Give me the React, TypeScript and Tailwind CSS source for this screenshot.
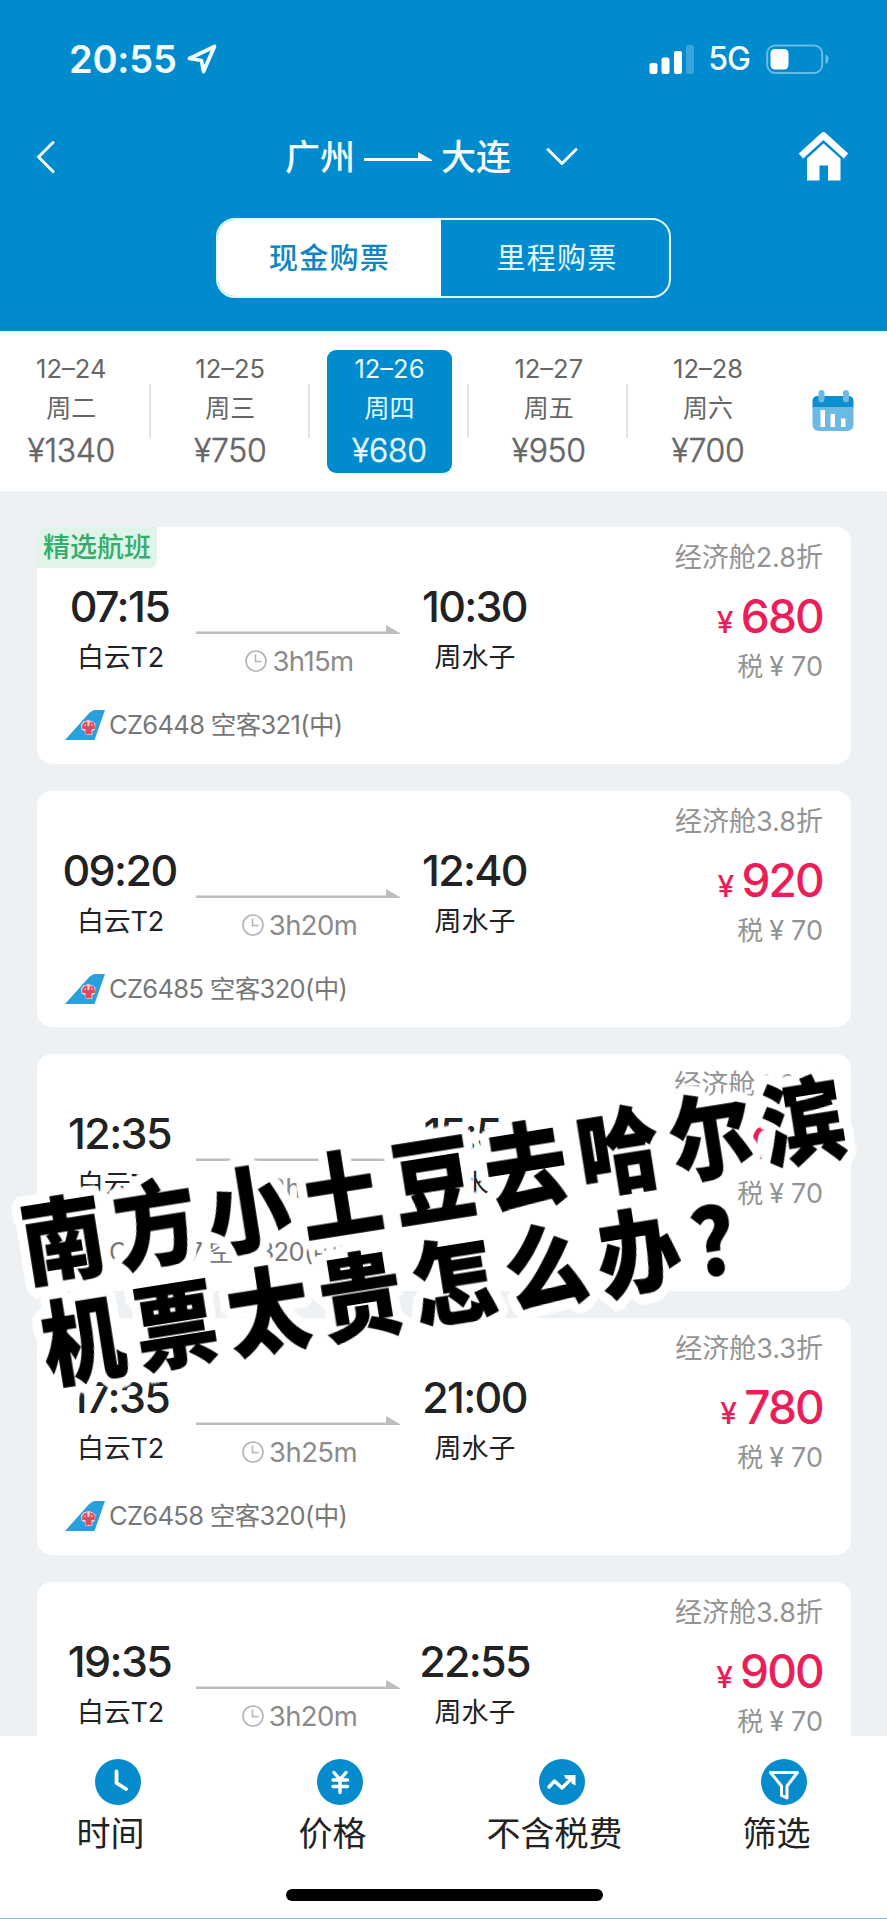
import React from "react";

const FONT = "font-['Inter','Noto_Sans_CJK_SC',sans-serif]";

const days = [
  { date: "12–24", week: "周二", price: "¥1340" },
  { date: "12–25", week: "周三", price: "¥750" },
  { date: "12–26", week: "周四", price: "¥680", active: true },
  { date: "12–27", week: "周五", price: "¥950" },
  { date: "12–28", week: "周六", price: "¥700" },
];

type Flight = {
  dep: string;
  arr: string;
  time: string;
  no: string;
  cabin: string;
  price: string;
  featured?: boolean;
};

const flights: Flight[] = [
  { dep: "07:15", arr: "10:30", time: "3h15m", no: "CZ6448 空客321(中)", cabin: "经济舱2.8折", price: "680", featured: true },
  { dep: "09:20", arr: "12:40", time: "3h20m", no: "CZ6485 空客320(中)", cabin: "经济舱3.8折", price: "920" },
  { dep: "12:35", arr: "15:55", time: "3h20m", no: "CZ6487 空客320(中)", cabin: "经济舱4.2折", price: "1010" },
  { dep: "17:35", arr: "21:00", time: "3h25m", no: "CZ6458 空客320(中)", cabin: "经济舱3.3折", price: "780" },
  { dep: "19:35", arr: "22:55", time: "3h20m", no: "CZ6490 空客320(中)", cabin: "经济舱3.8折", price: "900" },
];

function StatusBar() {
  return (
    <div className="flex h-[118px] items-center pr-[58px] pl-[69px] text-[#f3fdff]">
      <span className="text-[38px] leading-none font-semibold tracking-[-0.2px]">20:55</span>
      <svg className="ml-[10px]" width="31" height="31" viewBox="0 0 31 31" fill="none" stroke="currentColor" strokeWidth="3.8" strokeLinejoin="round">
        <path d="M2.500 14.500 L27.500 2.500 L16.500 27.500 L14.500 16.500 Z" />
      </svg>
      <div className="ml-auto flex items-center">
        <svg width="46" height="29" viewBox="0 0 46 29" fill="#fff">
          <rect x="0.5" y="18" width="8" height="11" rx="2.2" />
          <rect x="12.5" y="12.5" width="8" height="16.500" rx="2.2" />
          <rect x="25" y="6" width="8" height="23" rx="2.200" />
          <rect x="37" y="0" width="8" height="29" rx="2.2" opacity=".22" />
        </svg>
        <span className="ml-[13px] text-[32px] leading-none font-medium tracking-[-1px]">5G</span>
        <svg className="ml-[16px]" width="63" height="31" viewBox="0 0 63 31">
          <rect x="1.200" y="1.500" width="55" height="27.500" rx="8" fill="none" stroke="#fff" strokeOpacity=".42" strokeWidth="2" />
          <rect x="4.500" y="5" width="18" height="20.500" rx="4.500" fill="#fff" />
          <path d="M59.500 10.500 Q62.500 12 62.500 15 Q62.500 18.500 59.500 20 Z" fill="#fff" fillOpacity=".45" />
        </svg>
      </div>
    </div>
  );
}

function TitleBar() {
  return (
    <div className="flex h-[78px] items-center pr-[38px] pl-[36px] text-[#f7fdff]">
      <svg width="20" height="34" viewBox="0 0 20 34" fill="none" stroke="currentColor" strokeWidth="3" strokeLinecap="round" strokeLinejoin="round">
        <path d="M17 2.500 L2.500 17 L17 31.500" />
      </svg>
      <span className="ml-[229px] text-[35px] leading-none font-medium">广州</span>
      <svg className="ml-[9px]" width="68" height="16" viewBox="0 0 68 16" fill="currentColor">
        <path d="M0 9 H54 V3 L68 11 V12 H0 Z" />
      </svg>
      <span className="ml-[9px] text-[35px] leading-none font-medium">大连</span>
      <svg className="ml-[35px]" width="32" height="20" viewBox="0 0 32 20" fill="none" stroke="currentColor" strokeWidth="3" strokeLinecap="round" strokeLinejoin="round">
        <path d="M2 2.500 L16 16.500 L30 2.500" />
      </svg>
      <svg className="ml-auto" width="51" height="50" viewBox="0 0 51 50">
        <path d="M3 24 L25.500 3.500 L48 24" fill="none" stroke="#fff" strokeWidth="6.500" strokeLinejoin="round" />
        <path d="M9 26.500 L25.500 11.500 L42.500 26.500 V48.500 H30 V33.500 H21.500 V48.500 H9 Z" fill="#fff" />
      </svg>
    </div>
  );
}

function PayTabs() {
  return (
    <div className="mt-[22px] mr-[216px] ml-[216px] flex h-[80px] overflow-hidden rounded-[19px] border-[2.5px] border-[#e2f7ff] text-[29px] tracking-[1.3px]">
      <div className="flex w-[223px] items-center justify-center bg-white pt-[1px] font-medium text-[#0f86c4]">现金购票</div>
      <div className="flex flex-1 items-center justify-center pt-[1px] pl-[4px] text-[#e6f9ff]">里程购票</div>
    </div>
  );
}

function CalendarIcon() {
  return (
    <svg width="42" height="43" viewBox="0 0 42 43">
      <path d="M0.500 19 V12 Q0.500 7 6 7 H36 Q41.500 7 41.500 12 V19 Z" fill="#0d8fce" />
      <path d="M0.500 18 H41.500 V35 Q41.500 42 35 42 H7 Q0.500 42 0.500 35 Z" fill="#6cb9e2" />
      <rect x="6.500" y="1" width="6" height="12.500" rx="3" fill="#6cb9e2" />
      <rect x="31" y="1" width="6" height="12.500" rx="3" fill="#6cb9e2" />
      <path d="M8.500 21 H13 V38 H8.500 Z M18.500 25 H23 V38 H18.500 Z M29 29.500 H33.500 V38 H29 Z" fill="#fff" />
    </svg>
  );
}

function DateStrip() {
  return (
    <div className="flex h-[160px] shrink-0 bg-white text-[#666]">
      <div className="flex w-[788px] pt-[19px]">
        {days.map((d, i) => (
          <React.Fragment key={d.date}>
            {i > 0 && <div className="mt-[34px] h-[54px] w-[2px] shrink-0 bg-[#e3e4e6]" />}
            <div className={i === 0 ? "flex w-[148.500px] shrink-0 justify-center pr-[6px]" : "flex w-[157.300px] shrink-0 justify-center pl-[2px]"}>
              <div
                className={
                  d.active
                    ? "flex h-[123px] w-[125px] shrink-0 flex-col items-center rounded-[9px] bg-[#008bcf] text-[#e9fbff]"
                    : "flex h-[123px] w-[125px] shrink-0 flex-col items-center"
                }
              >
                <span className="mt-[5px] text-[25.500px] leading-[28px]">{d.date}</span>
                <span className="mt-[11px] text-[25px] leading-[28px]">{d.week}</span>
                <span className="mt-[12px] text-[32px] leading-[34px] font-light tracking-[-0.300px] [-webkit-text-stroke:0.500px_currentColor]">{d.price}</span>
              </div>
            </div>
          </React.Fragment>
        ))}
      </div>
      <div className="flex-1 pt-[58px] pl-[24px]">
        <CalendarIcon />
      </div>
    </div>
  );
}

function TailLogo() {
  return (
    <svg width="40" height="30" viewBox="0 0 40 30">
      <path d="M0 30 L22 5.500 Q26 0.500 30 0 H40 L29.500 30 Z" fill="#2a9fdd" />
      <path d="M16 14.500 L18.500 11.500 L23.500 10 L28 11.500 L30.500 14 L30 19.500 L27.500 21.500 L27 25 H20.500 L20 21.500 L16.500 19.500 Z" fill="#f1cfd8" />
      <g fill="none" stroke="#dd4a5e" strokeLinecap="round">
        <path d="M18 18 Q18 14.500 20 13 M21.500 17 V12.500 M25.500 17 V12.500 M29 18 Q29 14.500 27.500 13" strokeWidth="1.800" />
        <path d="M19.500 17.500 H27.500 M22 19 V23 M25 19 V23" strokeWidth="3" />
      </g>
    </svg>
  );
}

function FlightCard({ f }: { f: Flight }) {
  return (
    <div className="relative flex h-[236.500px] shrink-0 justify-between rounded-[15px] bg-white">
      {f.featured && (
        <div className="absolute top-0 left-0 flex h-[41px] w-[120px] items-center justify-center rounded-tl-[10px] rounded-br-[8px] bg-[#e0f4e8] pt-[2px] text-[27px] font-medium text-[#32ad6c]">
          精选航班
        </div>
      )}
      <div className="flex flex-col pt-[58px]">
        <div className="flex h-[125px]">
          <div className="flex w-[159px] flex-col items-center pl-[8px] text-[#222]">
            <span className="-ml-[2px] text-[43px] leading-[42px] font-medium tracking-[-1.600px]">{f.dep}</span>
            <span className="mt-[16px] text-[27px] leading-[30px] tracking-[-0.200px]">白云T2</span>
          </div>
          <div className="flex w-[204px] flex-col items-center pt-[40px] text-[#8b8b8b]">
            <svg width="204" height="10" viewBox="0 0 204 10" fill="#bdbdbd">
              <path d="M0 6.500 H190 V0 L204 8 V9 H0 Z" />
            </svg>
            <div className="mt-[11px] flex items-center pl-[3px]">
              <svg width="22" height="22" viewBox="0 0 22 22" fill="none" stroke="#b4b4b4" strokeWidth="1.600">
                <circle cx="11" cy="11" r="10" />
                <path d="M10.500 4.500 V11.500 H16.500" />
              </svg>
              <span className="ml-[5px] text-[27.500px] leading-[30px] tracking-[-0.600px]">{f.time}</span>
            </div>
          </div>
          <div className="flex w-[150px] flex-col items-center text-[#222]">
            <span className="-ml-[1px] text-[43px] leading-[42px] font-medium tracking-[-1.700px]">{f.arr}</span>
            <span className="mt-[16px] text-[27px] leading-[30px]">周水子</span>
          </div>
        </div>
        <div className="flex items-center pl-[28px] text-[#777]">
          <TailLogo />
          <span className="ml-[4px] text-[25.500px] leading-[30px] tracking-[-0.650px]">{f.no}</span>
        </div>
      </div>
      <div className="flex flex-col items-end pt-[16px] pr-[28px] text-[#939393]">
        <span className="text-[27px] leading-[30px]">{f.cabin}</span>
        <span className="mt-[20px] flex items-baseline text-[46px] leading-[46px] font-medium tracking-[-1.800px] text-[#ea1e58]">
          <span className="mr-[9px] text-[30px] leading-[30px]">¥</span>
          {f.price}
        </span>
        <span className="mt-[13px] flex text-[27px] leading-[30px]">
          <span className="text-[26px]">税</span>
          <span className="mr-[7px] ml-[6px]">¥</span>
          70
        </span>
      </div>
    </div>
  );
}

const actions = [
  {
    label: "时间",
    icon: <path d="M21.500 12.500 V24 L31 30" fill="none" stroke="#fff" strokeWidth="3.800" strokeLinecap="round" strokeLinejoin="round" />,
  },
  {
    label: "价格",
    icon: (
      <path d="M17 13.500 L23 20.500 L29 13.500 M16 21 H30.500 M16 27.500 H30.500 M23 21 V33.500" fill="none" stroke="#fff" strokeWidth="3.400" strokeLinecap="round" />
    ),
  },
  {
    label: "不含税费",
    icon: (
      <>
        <path d="M10 28 L15.500 22 L23 29 L33 19" fill="none" stroke="#fff" strokeWidth="3.400" strokeLinecap="round" strokeLinejoin="round" />
        <path d="M25 16 H36.500 V26.500 L32.500 24.500 V20 H27 Z" fill="#fff" />
      </>
    ),
  },
  {
    label: "筛选",
    icon: (
      <path d="M9.500 13.500 H36.500 L26 27 V39 L20.500 36.500 V27 Z" fill="none" stroke="#fff" strokeWidth="3" strokeLinejoin="round" />
    ),
  },
];

function BottomBar() {
  return (
    <footer className="z-10 flex h-[183px] shrink-0 flex-col items-center border-b border-[#74bfe4] bg-white">
      <div className="flex w-[888px] pt-[23px]">
        {actions.map((a) => (
          <div key={a.label} className="flex w-[222px] flex-col items-center">
            <svg className="ml-[14px]" width="46" height="46" viewBox="0 0 46 46">
              <circle cx="23" cy="23" r="23" fill="#068ccd" />
              {a.icon}
            </svg>
            <span className="mt-[7px] text-[34px] leading-[44px] font-normal text-[#222]">{a.label}</span>
          </div>
        ))}
      </div>
      <div className="mt-[33px] ml-[1px] h-[12px] w-[317px] rounded-full bg-black" />
    </footer>
  );
}

function Caption() {
  return (
    <div className="absolute top-[1189px] left-[23px] z-20 origin-[44px_56px] -rotate-[9deg] whitespace-nowrap">
      <div className="origin-top-left scale-y-[1.120] text-[82px] leading-[92px] font-black tracking-[11.700px] text-black [-webkit-text-stroke:1px_black] [filter:drop-shadow(3px_0_0_white)_drop-shadow(-3px_0_0_white)_drop-shadow(0_3px_0_white)_drop-shadow(0_-3px_0_white)_drop-shadow(3px_3px_0_white)_drop-shadow(-3px_-3px_0_white)_drop-shadow(3px_-3px_0_white)_drop-shadow(-3px_3px_0_white)]">
        南方小土豆去哈尔滨
        <br />
        <span className="ml-[4px]">机票太贵怎么办</span>
        <span className="ml-[2px] inline-block">？</span>
      </div>
    </div>
  );
}

export default function App() {
  return (
    <div className={`relative flex h-[1919px] w-[887px] flex-col overflow-hidden bg-[#edf1f3] ${FONT}`}>
      <header className="h-[331px] shrink-0 bg-[#008bcf]">
        <StatusBar />
        <TitleBar />
        <PayTabs />
      </header>
      <DateStrip />
      <main className="flex min-h-0 flex-1 flex-col gap-[27.200px] overflow-hidden pt-[36px] pr-[36px] pl-[37px]">
        {flights.map((f) => (
          <FlightCard key={f.dep} f={f} />
        ))}
      </main>
      <BottomBar />
      <Caption />
    </div>
  );
}
